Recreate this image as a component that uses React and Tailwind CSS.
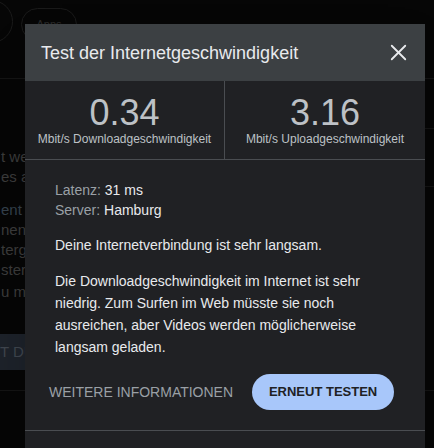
import React from 'react';
import { X } from 'lucide-react';

const font = { fontFamily: "'Liberation Sans', Arial, sans-serif" };

function Backdrop() {
  return (
    <div className="absolute inset-0 bg-[#060606]">
      {/* top bar remnants */}
      <div className="absolute left-[-30px] top-[0px] h-[43px] w-[43px] rounded-full border border-[#1a1a1a]" />
      <div className="absolute left-[21px] top-[8px] flex h-[33px] w-[56px] items-center justify-center rounded-full border border-[#1a1a1a] text-[11px] text-[#2a2a2a]">
        Apps
      </div>
      <div className="absolute left-0 right-0 top-[78px] h-px bg-[#141414]" />
      <div className="absolute left-[425px] right-0 top-[128px] h-px bg-[#141414]" />
      <div className="absolute left-[425px] right-0 top-[186px] h-px bg-[#141414]" />

      {/* page text peeking out on the left, under the dialog */}
      <div className="absolute left-[1px] top-[147px] whitespace-nowrap text-[15px] leading-[20px] text-[#3b3b3b]">
        <div>t wei</div>
        <div>es a</div>
        <div className="mt-[13px] text-[#34404c]">ent L</div>
        <div>nend</div>
        <div>terge</div>
        <div>sterg</div>
        <div className="mt-[2px]">u mit</div>
      </div>
      <div className="absolute left-0 top-[334px] flex h-[36px] w-[60px] items-center whitespace-nowrap bg-[#1d222a] text-[15px] font-medium text-[#3f454e]">
        <span>T DU</span>
      </div>
      <div className="absolute left-0 right-0 top-[390px] h-px bg-[#141414]" />
    </div>
  );
}

export default function App() {
  return (
    <div className="relative h-[448px] w-[434px] overflow-hidden" style={font}>
      <Backdrop />

      {/* Speed test dialog */}
      <div className="absolute left-[25px] top-[24px] w-[400px] h-[440px] bg-[#202124] shadow-2xl">
        <div className="flex h-[57px] items-center justify-between bg-[#3c4043] pl-4 pr-[13px]">
          <h2 className="pt-[1px] text-[18px] text-[#e8eaed]">Test der Internetgeschwindigkeit</h2>
          <X size={27} strokeWidth={1.6} className="text-[#e8eaed]" />
        </div>

        <div className="grid h-[79px] grid-cols-2 border-b border-[#4a4d51]">
          <div className="flex flex-col items-center border-r border-[#4a4d51] pt-[13px]">
            <span className="text-[36px] leading-[38px] text-[#bdc1c6]">0.34</span>
            <span className="text-[12px] leading-[14px] text-[#bdc1c6]">Mbit/s Downloadgeschwindigkeit</span>
          </div>
          <div className="flex flex-col items-center pt-[13px]">
            <span className="text-[36px] leading-[38px] text-[#bdc1c6]">3.16</span>
            <span className="text-[12px] leading-[14px] text-[#bdc1c6]">Mbit/s Uploadgeschwindigkeit</span>
          </div>
        </div>

        <div className="px-[30px] pt-[20px] text-[14px] text-[#e8eaed]">
          <div className="leading-[20px]">
            <div><span className="text-[#9aa0a6]">Latenz: </span>31 ms</div>
            <div><span className="text-[#9aa0a6]">Server: </span>Hamburg</div>
          </div>
          <p className="mt-[15px] leading-[20px]">Deine Internetverbindung ist sehr langsam.</p>
          <p className="mt-[15px] leading-[22px]">
            Die Downloadgeschwindigkeit im Internet ist sehr niedrig. Zum Surfen im Web müsste sie noch ausreichen, aber Videos werden möglicherweise langsam geladen.
          </p>
        </div>

        <div className="mt-[16px] flex items-center pl-[24px]">
          <span className="text-[14px] text-[#9aa0a6]">WEITERE INFORMATIONEN</span>
          <button className="ml-[19px] flex h-[36px] w-[142px] items-center justify-center rounded-full bg-[#a8c7fa] text-[13px] font-bold text-[#202124]">
            ERNEUT TESTEN
          </button>
        </div>

        <div className="mt-[20px] h-px bg-[#4a4d51]" />
      </div>
    </div>
  );
}
